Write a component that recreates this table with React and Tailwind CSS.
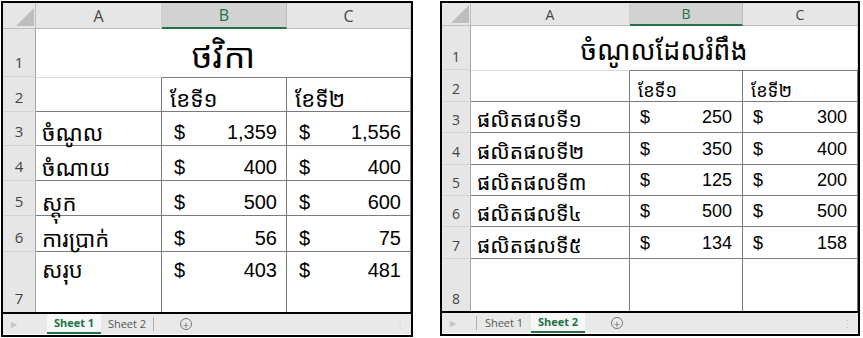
import React from 'react'

const KH = "font-['Khmer_OS','Khmer_OS_System','Noto_Sans_Khmer','Noto_Serif_Khmer','Khmer_OS_Content',sans-serif]"
const NUM = "font-['Liberation_Sans',Arial,sans-serif]"
const UI = "font-['Open_Sans','Liberation_Sans',sans-serif]"

const left = {
  width: 'w-[412px] h-[336px] mt-[1px] ml-[1px]',
  cols: 'grid-cols-[33px_126px_125px_124px]',
  rows: 'grid-rows-[26px_48px_35px_34px_35px_35px_36px_60px]',
  hdr: 'text-[16px]',
  rowNum: 'text-[15px] pb-[3px]',
  title: 'ថវិកា',
  titleCls: 'text-[34px] pt-[4px]',
  month: 'text-[22px] pb-[2px]',
  label: 'text-[22px] pb-[2px]',
  num: 'text-[20px] pb-[3px] pl-[12px] pr-[9px]',
  months: ['ខែទី១', 'ខែទី២'],
  data: [
    ['ចំណូល', '1,359', '1,556'],
    ['ចំណាយ', '400', '400'],
    ['ស្តុក', '500', '600'],
    ['ការប្រាក់', '56', '75'],
    ['សរុប', '403', '481'],
  ],
  lastTall: true,
  active: 0,
}

const right = {
  width: 'w-[420px] h-[335px] mt-[1px] ml-[27px]',
  cols: 'grid-cols-[29px_159px_113px_115px]',
  rows: 'grid-rows-[23px_44px_32px_31px_32px_31px_31px_32px_52px]',
  hdr: 'text-[14px]',
  rowNum: 'text-[14px] pb-[2px]',
  title: 'ចំណូលដែលរំពឹង',
  titleCls: 'text-[27px] pt-[2px]',
  month: 'text-[18px] pb-[2px]',
  label: 'text-[21px] pb-[2px]',
  num: 'text-[18px] pb-[5px] pl-[10px] pr-[10px]',
  months: ['ខែទី១', 'ខែទី២'],
  data: [
    ['ផលិតផលទី១', '250', '300'],
    ['ផលិតផលទី២', '350', '400'],
    ['ផលិតផលទី៣', '125', '200'],
    ['ផលិតផលទី៤', '500', '500'],
    ['ផលិតផលទី៥', '134', '158'],
  ],
  lastTall: false,
  active: 1,
}

const rowHead = 'flex items-end justify-center bg-[#e6e6e6] border-r border-b border-r-[#a6a6a6] border-b-[#d4d4d4] text-[#444]'
const dark = 'border-r border-b border-r-[#7b7b7b] border-b-[#7b7b7b]'

function Corner() {
  return (
    <div className="flex items-end justify-end bg-[#e6e6e6] border-r border-b border-r-[#bdbdbd] border-b-[#bdbdbd] pr-[1px] pb-[2px]">
      <svg width="18" height="18" viewBox="0 0 18 18">
        <path d="M18 0 L18 18 L0 18 Z" fill="#bdbdbd" />
      </svg>
    </div>
  )
}

function ColHead({ label, selected, size }) {
  if (selected) {
    return (
      <div className={`flex items-center justify-center bg-[#d2d2d2] border-r border-b-2 border-r-[#bdbdbd] border-b-[#217346] text-[#217346] ${UI} ${size}`}>
        {label}
      </div>
    )
  }
  return (
    <div className={`flex items-center justify-center bg-[#e6e6e6] border-r border-b border-r-[#d0d0d0] border-b-[#bdbdbd] text-[#444] ${UI} ${size}`}>
      {label}
    </div>
  )
}

function Amount({ value, cls, top, last }) {
  return (
    <div className={`flex ${top ? 'items-start pt-[8px]' : 'items-end'} justify-between ${NUM} ${cls} text-black leading-[20px] border-r border-r-[#7b7b7b] ${last ? '' : 'border-b border-b-[#7b7b7b]'}`}>
      <span>$</span>
      <span>{value}</span>
    </div>
  )
}

function TabBar({ active }) {
  return (
    <div className={`flex items-center h-[20px] bg-[#e9e9e9] border-t-2 border-black box-content ${UI} text-[11px]`}>
      <span className="w-[12px] ml-[8px] text-[8px] text-[#c4c4c4]">▶</span>
      {active === 0 ? (
        <>
          <div className="ml-[24px] w-[54px] h-full flex items-center justify-center bg-[#f7f7f7] border-b-2 border-[#217346] text-[#217346] font-bold">Sheet 1</div>
          <div className="w-[52px] text-center text-[#555]">Sheet 2</div>
          <div className="w-px h-[14px] bg-[#b0b0b0]" />
        </>
      ) : (
        <>
          <div className="ml-[14px] w-px h-[14px] bg-[#b0b0b0]" />
          <div className="w-[54px] text-center text-[#555]">Sheet 1</div>
          <div className="w-[54px] h-full flex items-center justify-center bg-[#f7f7f7] border-b-2 border-[#217346] text-[#217346] font-bold">Sheet 2</div>
        </>
      )}
      <div className="ml-[26px] w-[12px] h-[12px] rounded-full border border-[#777] flex items-center justify-center text-[#666] text-[11px] leading-none">+</div>
      <span className="ml-auto mr-[6px] text-[10px] text-[#c0c0c0] leading-none">⋮</span>
    </div>
  )
}

function Sheet({ s }) {
  const n = s.data.length
  return (
    <div className={`flex flex-col border-2 border-black bg-white ${s.width}`}>
      <div className={`grid ${s.cols} ${s.rows}`}>
        <Corner />
        <ColHead label="A" size={s.hdr} />
        <ColHead label="B" size={s.hdr} selected />
        <ColHead label="C" size={s.hdr} />

        <div className={`${rowHead} ${UI} ${s.rowNum}`}>1</div>
        <div className={`col-span-3 flex items-center justify-center ${KH} ${s.titleCls} text-black leading-none border-r border-r-[#d9d9d9]`}>
          {s.title}
        </div>

        <div className={`${rowHead} ${UI} ${s.rowNum}`}>2</div>
        <div className="border-t border-t-[#d9d9d9] border-r border-b border-r-[#7b7b7b] border-b-[#7b7b7b]" />
        <div className={`flex items-end pl-[8px] ${KH} ${s.month} leading-none border-t border-t-[#7b7b7b] ${dark}`}>{s.months[0]}</div>
        <div className={`flex items-end pl-[8px] ${KH} ${s.month} leading-none border-t border-t-[#7b7b7b] ${dark}`}>{s.months[1]}</div>

        {s.data.map((r, i) => {
          const last = s.lastTall && i === n - 1
          return (
            <React.Fragment key={i}>
              <div className={`${rowHead} ${UI} ${s.rowNum} ${last ? 'border-b-0' : ''}`}>{i + 3}</div>
              <div className={`flex ${last ? 'items-start pt-[6px]' : 'items-end'} pl-[6px] ${KH} ${s.label} leading-none border-r border-r-[#7b7b7b] ${last ? '' : 'border-b border-b-[#7b7b7b]'}`}>
                {r[0]}
              </div>
              <Amount value={r[1]} cls={s.num} top={last} last={last} />
              <Amount value={r[2]} cls={s.num} top={last} last={last} />
            </React.Fragment>
          )
        })}

        {!s.lastTall && (
          <>
            <div className={`${rowHead} ${UI} ${s.rowNum} border-b-0`}>{n + 3}</div>
            <div className="border-r border-r-[#7b7b7b]" />
            <div className="border-r border-r-[#7b7b7b]" />
            <div className="border-r border-r-[#7b7b7b]" />
          </>
        )}
      </div>
      <TabBar active={s.active} />
    </div>
  )
}

export default function App() {
  return (
    <div className="flex items-start w-[863px] h-[338px] bg-white overflow-hidden">
      <Sheet s={left} />
      <Sheet s={right} />
    </div>
  )
}
